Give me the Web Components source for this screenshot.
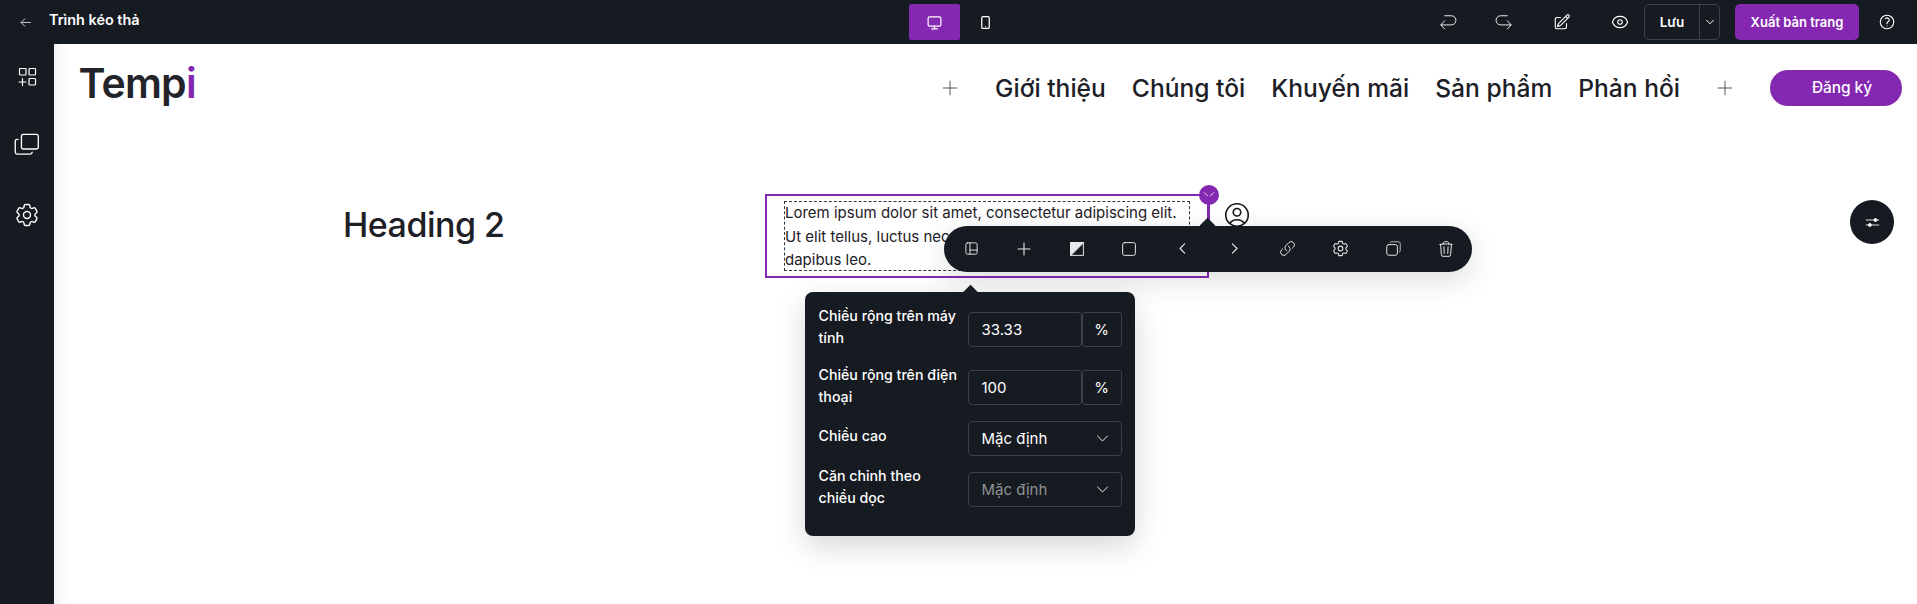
<!DOCTYPE html>
<html lang="vi">
<head>
<meta charset="utf-8">
<title>Trình kéo thả</title>
<style>
  html, body { margin: 0; height: 100%; overflow: hidden; background: #fff; }
  body { font-family: Inter, "Noto Sans", sans-serif; }
</style>
</head>
<body>
<builder-app>
  <builder-topbar slot="top"></builder-topbar>
  <builder-sidebar slot="side"></builder-sidebar>
  <site-header></site-header>
  <content-row>
    <h2-block>Heading 2</h2-block>
    <selection-frame>
      Lorem ipsum dolor sit amet, consectetur adipiscing elit. Ut elit tellus, luctus nec ullamcorper mattis, pulvinar dapibus leo.
      <block-toolbar slot="overlay"></block-toolbar>
      <column-popover slot="overlay"></column-popover>
    </selection-frame>
    <tk-icon name="user" size="30" sw="1.3" style="color:#16181d;margin:6px 0 0 13px"></tk-icon>
  </content-row>
  <float-button></float-button>
</builder-app>

<script>
const ICONS = {
  back: '<path d="M20 12H5M11 6l-6 6 6 6"/>',
  widgets: '<rect x="4.5" y="3.5" width="6.5" height="6.5" rx=".8"/><rect x="14" y="3.5" width="6.5" height="6.5" rx=".8"/><rect x="14" y="13.5" width="6.5" height="6.5" rx=".8"/><path d="M7.5 13.5v7M4 17h7"/>',
  stack: '<rect x="7.5" y="3" width="15" height="13" rx="1.6"/><path d="M4.5 7.5H3.6A1.6 1.6 0 0 0 2 9.1v9.8a1.6 1.6 0 0 0 1.6 1.6h11.8a1.6 1.6 0 0 0 1.6-1.6V19"/>',
  gear: '<path d="M9.594 3.94c.09-.542.56-.94 1.11-.94h2.593c.55 0 1.02.398 1.11.94l.213 1.281c.063.374.313.686.645.87.074.04.147.083.22.127.325.196.72.257 1.075.124l1.217-.456a1.125 1.125 0 0 1 1.37.49l1.296 2.247a1.125 1.125 0 0 1-.26 1.431l-1.003.827c-.293.241-.438.613-.43.992a7.723 7.723 0 0 1 0 .255c-.008.378.137.75.43.991l1.004.827c.424.35.534.955.26 1.43l-1.298 2.247a1.125 1.125 0 0 1-1.369.491l-1.217-.456c-.355-.133-.75-.072-1.076.124a6.47 6.47 0 0 1-.22.128c-.331.183-.581.495-.644.869l-.213 1.281c-.09.543-.56.94-1.11.94h-2.594c-.55 0-1.019-.398-1.11-.94l-.213-1.281c-.062-.374-.312-.686-.644-.87a6.52 6.52 0 0 1-.22-.127c-.325-.196-.72-.257-1.076-.124l-1.217.456a1.125 1.125 0 0 1-1.369-.49l-1.297-2.247a1.125 1.125 0 0 1 .26-1.431l1.004-.827c.292-.24.437-.613.43-.991a6.932 6.932 0 0 1 0-.255c.007-.38-.138-.751-.43-.992l-1.004-.827a1.125 1.125 0 0 1-.26-1.43l1.297-2.247a1.125 1.125 0 0 1 1.37-.491l1.216.456c.356.133.751.072 1.076-.124.072-.044.146-.086.22-.128.332-.183.582-.495.644-.869l.214-1.28Z"/><path d="M15 12a3 3 0 1 1-6 0 3 3 0 0 1 6 0Z"/>',
  monitor: '<rect x="3" y="4" width="18" height="13" rx="2"/><path d="M8 21h8M12 17v4"/>',
  phone: '<rect x="6" y="2.5" width="12" height="19" rx="2"/><path d="M12 18.5v.01"/>',
  undo: '<path d="M8 4.5h8a5.5 5.5 0 0 1 0 11H3.5M8 10.5l-4.5 5 4.5 5"/>',
  redo: '<path d="M16 4.5H8a5.5 5.5 0 0 0 0 11h12.5M16 10.5l4.5 5-4.5 5"/>',
  edit: '<path d="m16.862 4.487 1.687-1.688a1.875 1.875 0 1 1 2.652 2.652L10.582 16.07a4.5 4.5 0 0 1-1.897 1.13L6 18l.8-2.685a4.5 4.5 0 0 1 1.13-1.897l8.932-8.931Zm0 0L19.5 7.125M18 14v4.75A2.25 2.25 0 0 1 15.75 21H5.25A2.25 2.25 0 0 1 3 18.75V8.25A2.25 2.25 0 0 1 5.25 6H10"/>',
  eye: '<path d="M2.036 12.322a1.012 1.012 0 0 1 0-.639C3.423 7.51 7.36 4.5 12 4.5c4.638 0 8.573 3.007 9.963 7.178.07.207.07.431 0 .639C20.577 16.49 16.64 19.5 12 19.5c-4.638 0-8.573-3.007-9.963-7.178Z"/><path d="M15 12a3 3 0 1 1-6 0 3 3 0 0 1 6 0Z"/>',
  chevron: '<path d="m5 8.5 7 7 7-7"/>',
  help: '<path d="M9.879 7.519c1.171-1.025 3.071-1.025 4.242 0 1.172 1.025 1.172 2.687 0 3.712-.203.179-.43.326-.67.442-.745.361-1.45.999-1.45 1.827v.75M21 12a9 9 0 1 1-18 0 9 9 0 0 1 18 0Zm-9 5.25h.008v.008H12v-.008Z"/>',
  plus: '<path d="M12 3v18M3 12h18"/>',
  user: '<path d="M17.982 18.725A7.488 7.488 0 0 0 12 15.75a7.488 7.488 0 0 0-5.982 2.975m11.963 0a9 9 0 1 0-11.963 0m11.963 0A8.966 8.966 0 0 1 12 21a8.966 8.966 0 0 1-5.982-2.275M15 9.75a3 3 0 1 1-6 0 3 3 0 0 1 6 0Z"/>',
  layout: '<rect x="3" y="3" width="18" height="18" rx="2.5"/><path d="M9.5 3v18M9.5 14.5H21"/>',
  contrast: '<rect x="3.5" y="3.5" width="17" height="17" stroke-linejoin="miter"/><path d="M3.5 20.5v-17h17Z" fill="currentColor"/>',
  square: '<rect x="3.5" y="3.5" width="17" height="17" rx="2.5"/>',
  left: '<path d="M15.5 4.5 8 12l7.5 7.5"/>',
  right: '<path d="M8.5 4.5 16 12l-7.5 7.5"/>',
  link: '<path d="M13.19 8.688a4.5 4.5 0 0 1 1.242 7.244l-4.5 4.5a4.5 4.5 0 0 1-6.364-6.364l1.757-1.757m13.35-.622 1.757-1.757a4.5 4.5 0 0 0-6.364-6.364l-4.5 4.5a4.5 4.5 0 0 0 1.242 7.244"/>',
  copy: '<rect x="2.5" y="6.5" width="15" height="15" rx="3"/><path d="M7 3.5c.4-.6 1-1 1.8-1h10a2.7 2.7 0 0 1 2.7 2.7v10c0 .8-.4 1.4-1 1.8" opacity=".75"/>',
  trash: '<path d="m14.74 9-.346 9m-4.788 0L9.26 9m9.968-3.21c.342.052.682.107 1.022.166m-1.022-.165L18.16 19.673a2.25 2.25 0 0 1-2.244 2.077H8.084a2.25 2.25 0 0 1-2.244-2.077L4.772 5.79m14.456 0a48.108 48.108 0 0 0-3.478-.397m-12 .562c.34-.059.68-.114 1.022-.165m0 0a48.11 48.11 0 0 1 3.478-.397m7.5 0v-.916c0-1.18-.91-2.164-2.09-2.201a51.964 51.964 0 0 0-3.32 0c-1.18.037-2.09 1.022-2.09 2.201v.916m7.5 0a48.667 48.667 0 0 0-7.5 0"/>',
  sliders: '<path d="M2 8h20M2 16h20"/><rect x="14.5" y="5.8" width="4.5" height="4.4" rx="2" fill="currentColor"/><rect x="5.5" y="13.8" width="4.5" height="4.4" rx="2" fill="currentColor"/>'
};

class TkIcon extends HTMLElement {
  connectedCallback() {
    if (this.shadowRoot) return;
    const size = this.getAttribute("size") || 20;
    const sw = this.getAttribute("sw") || 1.5;
    const name = this.getAttribute("name");
    this.attachShadow({ mode: "open" }).innerHTML = `
      <style>:host { display: inline-flex; flex: none; width: ${size}px; height: ${size}px; } svg { display: block; }</style>
      <svg xmlns="http://www.w3.org/2000/svg" width="${size}" height="${size}" viewBox="0 0 24 24" fill="none" stroke="currentColor" stroke-width="${sw}" stroke-linecap="round" stroke-linejoin="round">${ICONS[name] || ""}</svg>`;
  }
}
customElements.define("tk-icon", TkIcon);

class BuilderApp extends HTMLElement {
  constructor() {
    super();
    this.attachShadow({ mode: "open" }).innerHTML = `
      <style>
        :host { display: grid; grid-template-columns: 53.5px 1fr; grid-template-rows: 44px 560px; width: 1917px; height: 604px; overflow: hidden; }
        .top { grid-column: 1 / 3; }
        .canvas { position: relative; background: #fff; min-width: 0; overflow: hidden; }
        .canvas::before { content: ""; position: absolute; left: 0; top: 0; bottom: 0; width: 14px; background: linear-gradient(90deg, rgba(22,26,33,.05), rgba(22,26,33,0)); }
      </style>
      <div class="top"><slot name="top"></slot></div>
      <slot name="side"></slot>
      <main class="canvas"><slot></slot></main>`;
  }
}
customElements.define("builder-app", BuilderApp);

class BuilderTopbar extends HTMLElement {
  constructor() {
    super();
    this.attachShadow({ mode: "open" }).innerHTML = `
      <style>
        :host { display: flex; align-items: center; height: 44px; background: #161a21; color: #fff; font: 600 13.5px/20px Inter, sans-serif; }
        .back { display: flex; align-items: center; width: 49px; padding-left: 18px; box-sizing: border-box; color: #c9ccd1; }
        .title { width: 860px; padding-bottom: 5px; box-sizing: border-box; font-size: 14.4px; }
        .devices { display: flex; }
        .device { display: flex; align-items: center; justify-content: center; width: 51px; height: 36px; border-radius: 2px; }
        .device.on { background: #8428b2; }
        .actions { display: flex; align-items: center; margin-left: auto; padding-right: 21px; }
        .act { display: flex; justify-content: center; width: 20px; }
        .save { display: flex; align-items: stretch; height: 36px; box-sizing: border-box; border: 1px solid #3d4046; border-radius: 5px; font-size: 13.5px; }
        .save span { display: flex; align-items: center; justify-content: center; width: 54px; border-right: 1px solid #3d4046; }
        .save i { display: flex; align-items: center; justify-content: center; width: 19px; }
        .publish { display: flex; align-items: center; justify-content: center; width: 124px; height: 36px; margin: 0 19px 0 15px; background: #8428b2; border-radius: 5px; font-size: 13px; }
      </style>
      <div class="back"><tk-icon name="back" size="15"></tk-icon></div>
      <div class="title">Trình kéo thả</div>
      <div class="devices">
        <div class="device on"><tk-icon name="monitor" size="17" sw="1.7"></tk-icon></div>
        <div class="device"><tk-icon name="phone" size="15" sw="2"></tk-icon></div>
      </div>
      <div class="actions">
        <div class="act" style="margin-right:36px"><tk-icon name="undo" size="20" sw="1.1"></tk-icon></div>
        <div class="act" style="margin-right:38px"><tk-icon name="redo" size="20" sw="1.1"></tk-icon></div>
        <div class="act" style="margin-right:38px"><tk-icon name="edit" size="18"></tk-icon></div>
        <div class="act" style="margin-right:14px"><tk-icon name="eye" size="18"></tk-icon></div>
        <div class="save"><span>Lưu</span><i><tk-icon name="chevron" size="12" sw="2"></tk-icon></i></div>
        <div class="publish">Xuất bản trang</div>
        <tk-icon name="help" size="18"></tk-icon>
      </div>`;
  }
}
customElements.define("builder-topbar", BuilderTopbar);

class BuilderSidebar extends HTMLElement {
  constructor() {
    super();
    this.attachShadow({ mode: "open" }).innerHTML = `
      <style>
        :host { display: flex; flex-direction: column; align-items: center; height: 560px; padding: 21px 0 0; box-sizing: border-box; background: #161a21; color: #fff; }
      </style>
      <tk-icon name="widgets" size="24" sw="1.2"></tk-icon>
      <tk-icon name="stack" size="27" sw="1.2" style="margin-top:42px"></tk-icon>
      <tk-icon name="gear" size="28" sw="1.2" style="margin-top:43px"></tk-icon>`;
  }
}
customElements.define("builder-sidebar", BuilderSidebar);

class SiteHeader extends HTMLElement {
  constructor() {
    super();
    this.attachShadow({ mode: "open" }).innerHTML = `
      <style>
        :host { display: flex; align-items: center; height: 88px; padding: 0 15px 0 25px; color: #1d2026; }
        .logo { font: 600 41px/50px Inter, sans-serif; letter-spacing: -.8px; margin-top: -10px; color: #23242a; }
        .logo b { color: #8428b2; font-weight: inherit; }
        nav { display: flex; align-items: center; gap: 26px; margin-left: auto; font: 500 24.6px/30px Inter, sans-serif; }
        .plus { color: #3f4248; margin: 0 10px; }
        .cta { display: flex; align-items: center; justify-content: center; width: 132px; height: 36px; padding-left: 12px; box-sizing: border-box; border-radius: 18px; background: #8428b2; color: #fff; font: 500 15.4px/20px Inter, sans-serif; }
      </style>
      <div class="logo">Temp<b>i</b></div>
      <nav>
        <tk-icon class="plus" name="plus" size="18" sw="1.2"></tk-icon>
        <span>Giới thiệu</span><span>Chúng tôi</span><span>Khuyến mãi</span><span>Sản phẩm</span><span>Phản hồi</span>
        <tk-icon class="plus" name="plus" size="18" sw="1.2"></tk-icon>
        <div class="cta">Đăng ký</div>
      </nav>`;
  }
}
customElements.define("site-header", SiteHeader);

class ContentRow extends HTMLElement {
  constructor() {
    super();
    this.attachShadow({ mode: "open" }).innerHTML = `
      <style>
        :host { display: grid; grid-template-columns: 444px 444px 444px; width: 1332px; margin: 62px 0 0 267.5px; align-items: start; }
      </style>
      <slot></slot>`;
  }
}
customElements.define("content-row", ContentRow);

class H2Block extends HTMLElement {
  constructor() {
    super();
    this.attachShadow({ mode: "open" }).innerHTML = `
      <style>
        :host { display: block; padding: 9px 20px 0 22px; color: #1d2026; font: 500 34px/44px Inter, sans-serif; letter-spacing: -.5px; }
      </style>
      <slot></slot>`;
  }
}
customElements.define("h2-block", H2Block);

class SelectionFrame extends HTMLElement {
  constructor() {
    super();
    this.attachShadow({ mode: "open" }).innerHTML = `
      <style>
        :host { display: block; position: relative; box-sizing: border-box; height: 84px; padding: 5px 17px; border: 2.5px solid #8428b2; }
        .text { box-sizing: border-box; height: 70px; border: 1px dashed #33363c; color: #1d2026; font: 400 15px/23.5px Inter, sans-serif; }
        .inner { margin-top: -1px; }
        .dot { position: absolute; right: -11.5px; top: -11.5px; display: flex; align-items: center; justify-content: center; width: 20px; height: 20px; border-radius: 50%; background: #8428b2; color: #e8d5f2; }
        .stem { position: absolute; right: -2.5px; top: 0; width: 2.5px; height: 32px; background: #8428b2; }
      </style>
      <div class="text"><div class="inner"><slot></slot></div></div>
      <div class="dot"><tk-icon name="chevron" size="16" sw="1.5"></tk-icon></div>
      <div class="stem"></div>
      <slot name="overlay"></slot>`;
  }
}
customElements.define("selection-frame", SelectionFrame);

class BlockToolbar extends HTMLElement {
  constructor() {
    super();
    const icons = [["layout", 15, 1.5], ["plus", 16, 1.6], ["contrast", 18, 1.3], ["square", 18, 1.3], ["left", 15, 1.7], ["right", 15, 1.7], ["link", 17, 1.4], ["gear", 19, 1.3], ["copy", 17, 1.4], ["trash", 18, 1.3]];
    this.attachShadow({ mode: "open" }).innerHTML = `
      <style>
        :host { position: absolute; left: 176.5px; top: 29.5px; display: flex; align-items: center; justify-content: space-between; box-sizing: border-box; width: 528px; height: 46px; padding: 0 17px 0 19px; border-radius: 23px; background: #161a21; color: #e8e9eb; box-shadow: 0 8px 30px rgba(0,0,0,.14); }
        :host::before { content: ""; position: absolute; left: 258px; top: -5.5px; width: 11px; height: 11px; background: #161a21; transform: rotate(45deg); }
        .b { display: flex; justify-content: center; width: 17px; }
      </style>
      ${icons.map(([n, s, w]) => `<span class="b"><tk-icon name="${n}" size="${s}" sw="${w}"></tk-icon></span>`).join("")}`;
  }
}
customElements.define("block-toolbar", BlockToolbar);

class ColumnPopover extends HTMLElement {
  constructor() {
    super();
    const label = (text, top, h) => `<div class="row" style="height:${h}px"><div class="label" style="margin-top:${top}px">${text}</div>`;
    const chevron = `<tk-icon name="chevron" size="17" sw="1.3"></tk-icon>`;
    this.attachShadow({ mode: "open" }).innerHTML = `
      <style>
        :host { position: absolute; left: 37.5px; top: 95.5px; box-sizing: border-box; width: 330px; height: 244px; padding: 20px 13px 0 14px; border-radius: 8px; background: #161a21; color: #fff; font: 500 14.2px/22px Inter, sans-serif; box-shadow: 0 10px 30px rgba(0,0,0,.16); }
        :host::before { content: ""; position: absolute; left: 160px; top: -5px; width: 11px; height: 11px; background: #161a21; transform: rotate(45deg); }
        .row { display: flex; position: relative; align-items: flex-start; margin-bottom: 16px; }
        .label { width: 149px; flex: none; padding-right: 3px; box-sizing: border-box; }
        .field { display: flex; width: 154px; height: 35px; flex: none; font: 400 15px/33px Inter, sans-serif; }
        .input, .unit, .select { box-sizing: border-box; height: 35px; border: 1px solid #3d4046; }
        .input { width: 114px; padding-left: 13px; border-radius: 4px; }
        .unit { width: 40px; text-align: center; border-radius: 3px; }
        .select { display: flex; align-items: center; justify-content: space-between; width: 154px; padding: 0 10px 0 13px; border-radius: 4px; }
        .muted { color: #8f9194; }
      </style>
      ${label("Chiều rộng trên máy tính", -7, 42)}<div class="field"><div class="input">33.33</div><div class="unit">%</div></div></div>
      ${label("Chiều rộng trên điện thoại", -6, 35)}<div class="field"><div class="input">100</div><div class="unit">%</div></div></div>
      ${label("Chiều cao", 4, 35)}<div class="field"><div class="select">Mặc định${chevron}</div></div></div>
      ${label("Căn chỉnh theo<br>chiều dọc", -7, 35)}<div class="field"><div class="select"><span class="muted">Mặc định</span>${chevron}</div></div></div>`;
  }
}
customElements.define("column-popover", ColumnPopover);

class FloatButton extends HTMLElement {
  constructor() {
    super();
    this.attachShadow({ mode: "open" }).innerHTML = `
      <style>
        :host { position: absolute; left: 1796.5px; top: 156px; display: flex; align-items: center; justify-content: center; width: 44px; height: 44px; border-radius: 50%; background: #161a21; color: #fff; }
      </style>
      <tk-icon name="sliders" size="15" sw="1.4"></tk-icon>`;
  }
}
customElements.define("float-button", FloatButton);
</script>
</body>
</html>
